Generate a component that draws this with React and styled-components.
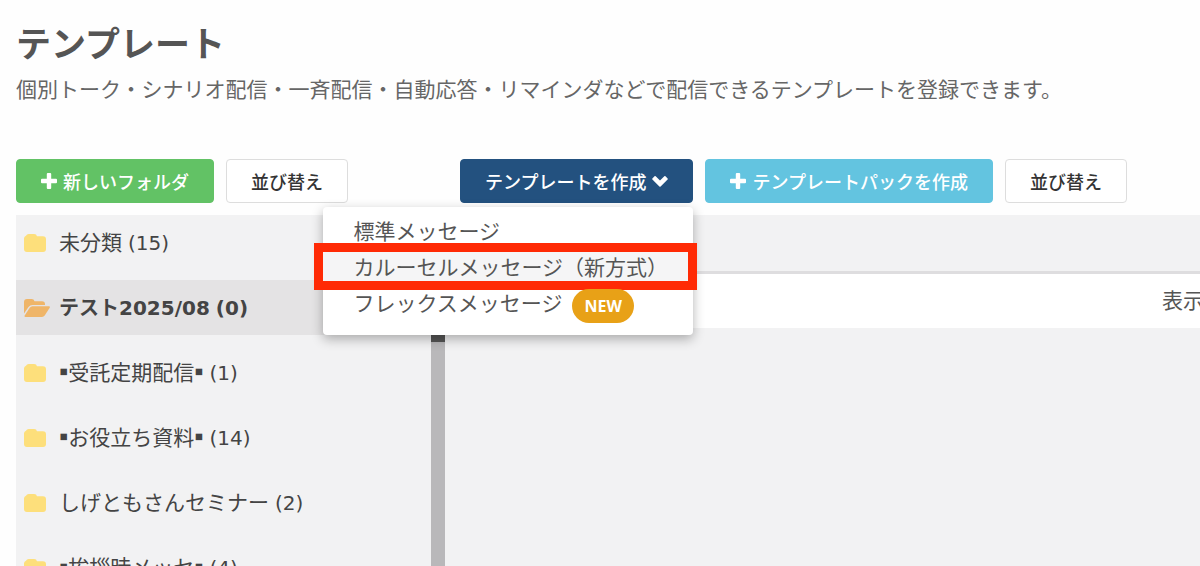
import React from "react";
import styled, { createGlobalStyle, css } from "styled-components";

const folders = [
  { name: "未分類", count: 15 },
  { name: "テスト2025/08", count: 0, open: true },
  { name: "受託定期配信", count: 1, marked: true },
  { name: "お役立ち資料", count: 14, marked: true },
  { name: "しげともさんセミナー", count: 2 },
  { name: "挨拶時メッセ", count: 4, marked: true },
];

//Icons
const PlusIcon = () => (
  <svg width="16" height="16" viewBox="0 0 16 16" fill="currentColor" aria-hidden="true">
    <path d="M6.8 0h2.4a1 1 0 0 1 1 1v4.8H15a1 1 0 0 1 1 1v2.4a1 1 0 0 1-1 1h-4.8V15a1 1 0 0 1-1 1H6.8a1 1 0 0 1-1-1v-4.800H1a1 1 0 0 1-1-1V6.800a1 1 0 0 1 1-1h4.800V1a1 1 0 0 1 1-1z" />
  </svg>
);

const ChevronIcon = () => (
  <svg width="16" height="16" viewBox="0 0 16 16" fill="currentColor" aria-hidden="true">
    <path d="M8.600 13.600a.9.9 0 0 1-1.200 0L.4 6.600a.9.9 0 0 1 0-1.200l2.100-2.100a.9.9 0 0 1 1.200 0L8 7.500l4.300-4.200a.9.9 0 0 1 1.200 0l2.100 2.100a.9.9 0 0 1 0 1.200z" />
  </svg>
);

const FolderIcon = () => (
  <svg width="22" height="20" viewBox="0 0 22 20" fill="#fddf7b" aria-hidden="true">
    <path d="M5 1h5a3 3 0 0 1 3 2.300h6a3 3 0 0 1 3 3V16a3 3 0 0 1-3 3H3a3 3 0 0 1-3-3V5.300a3 3 0 0 1 2-2.500A3 3 0 0 1 5 1z" />
  </svg>
);

const FolderOpenIcon = () => (
  <svg width="26" height="20" viewBox="0 0 26 20" fill="#efb568" aria-hidden="true">
    <path d="M0 15.500V4a3 3 0 0 1 3-3h4.500a3 3 0 0 1 3 2.300H18a3 3 0 0 1 3 3V7H8.500a5 5 0 0 0-4 2z" />
    <path d="M8.500 8.200h16.300c.9 0 1.400.7.900 1.500l-5 7.800A3.500 3.500 0 0 1 18 19H1.500c-.9 0-1.300-.7-.8-1.500l5-7.800a3.500 3.500 0 0 1 2.800-1.500z" />
  </svg>
);

const App = () => {
  return (
    <Page>
      <GlobalStyle />
      <Header>
        <h1>テンプレート</h1>
        <p>
          個別トーク・シナリオ配信・一斉配信・自動応答・リマインダなどで配信できるテンプレートを登録できます。
        </p>
      </Header>
      <Columns>
        <Sidebar>
          <Toolbar>
            <Button $color="green">
              <PlusIcon />
              新しいフォルダ
            </Button>
            <Button>並び替え</Button>
          </Toolbar>
          <FolderPane>
            <FolderList>
              {folders.map((folder) => (
                <Folder key={folder.name} $open={folder.open}>
                  <i>{folder.open ? <FolderOpenIcon /> : <FolderIcon />}</i>
                  <FolderName>
                    {folder.marked && <Square>▪</Square>}
                    {folder.name}
                    {folder.marked && <Square>▪</Square>}
                  </FolderName>
                  <span>({folder.count})</span>
                </Folder>
              ))}
            </FolderList>
            <Scrollbar>
              <Thumb />
            </Scrollbar>
          </FolderPane>
        </Sidebar>
        <Content>
          <Toolbar $inset>
            <Dropdown>
              <Button $color="navy" aria-haspopup="menu" aria-expanded="true">
                テンプレートを作成
                <ChevronIcon />
              </Button>
              <Menu>
                <MenuItem href="#standard">標準メッセージ</MenuItem>
                <MenuItem href="#carousel" $marked>
                  カルーセルメッセージ（新方式）
                </MenuItem>
                <MenuItem href="#flex">
                  フレックスメッセージ
                  <Badge>NEW</Badge>
                </MenuItem>
              </Menu>
            </Dropdown>
            <Button $color="sky">
              <PlusIcon />
              テンプレートパックを作成
            </Button>
            <Button>並び替え</Button>
          </Toolbar>
          <TemplatePane>
            <PaneHead />
            <PaneBar>
              <span>表示</span>
            </PaneBar>
          </TemplatePane>
        </Content>
      </Columns>
    </Page>
  );
};

//Styles
const GlobalStyle = createGlobalStyle`
  * {
    box-sizing: border-box;
    margin: 0;
    padding: 0;
  }
  body {
    background: #fefefe;
    color: #555;
    font-family: "DejaVu Sans", "Noto Sans CJK JP", sans-serif;
    font-size: 21px;
    line-height: 32px;
    overflow: hidden;
  }
`;

const Page = styled.div`
  display: flex;
  flex-direction: column;
  height: 100vh;
  padding-left: 16px;
`;

const Header = styled.header`
  padding: 18px 0 55px;
  font-family: "Noto Sans CJK JP", sans-serif;
  white-space: nowrap;
  h1 {
    font-size: 35px;
    line-height: 48px;
    margin-bottom: 6px;
  }
  p {
    color: #666;
  }
`;

const Columns = styled.div`
  display: flex;
  flex: 1;
  min-height: 0;
`;

const Sidebar = styled.aside`
  display: flex;
  flex-direction: column;
  flex: 0 0 429px;
`;

const Content = styled.main`
  display: flex;
  flex-direction: column;
  flex: 1;
  min-width: 0;
`;

const Toolbar = styled.div`
  display: flex;
  gap: 12px;
  padding: 0 0 12px ${({ $inset }) => ($inset ? "15px" : "0")};
`;

const colors = {
  green: "#62c265",
  navy: "#23517f",
  sky: "#63c4e0",
};

const Button = styled.button`
  display: flex;
  align-items: center;
  gap: 6px;
  flex: none;
  height: 44px;
  padding: 0 24px;
  border: 1px solid #ddd;
  border-radius: 4px;
  background: #fff;
  color: #333;
  font-family: "Noto Sans CJK JP", sans-serif;
  font-size: 18px;
  font-weight: 500;
  white-space: nowrap;
  ${({ $color }) =>
    $color &&
    css`
      border-color: ${colors[$color]};
      background: ${colors[$color]};
      color: #fff;
    `}
`;

const FolderPane = styled.div`
  display: flex;
  flex: 1;
  min-height: 0;
  background: #f2f2f3;
`;

const FolderList = styled.ul`
  display: flex;
  flex-direction: column;
  gap: 10px;
  flex: 1;
  list-style: none;
  overflow: hidden;
`;

const FolderName = styled.span`
  margin-right: 6px;
  font-size: 21px;
`;

const Square = styled.span`
  font-family: "Liberation Sans", sans-serif;
  font-size: 26px;
  line-height: 1;
`;

const Folder = styled.li`
  display: flex;
  align-items: center;
  flex: none;
  height: 55px;
  padding-left: 8px;
  color: #444;
  font-size: 20px;
  white-space: nowrap;
  i {
    display: flex;
    width: 35px;
  }
  ${({ $open }) =>
    $open &&
    css`
      background: #e4e3e4;
      font-weight: bold;
      ${FolderName} {
        font-size: 20px;
      }
    `}
`;

const Scrollbar = styled.div`
  width: 14px;
  background: #b9b8ba;
`;

const Thumb = styled.div`
  height: 127px;
  background: #555;
`;

const TemplatePane = styled.section`
  flex: 1;
  background: #f2f2f3;
`;

const PaneHead = styled.div`
  height: 59px;
  border-bottom: 3px solid #dedddf;
`;

const PaneBar = styled.div`
  display: flex;
  align-items: center;
  justify-content: flex-end;
  height: 54px;
  background: #fff;
  overflow: hidden;
  span {
    margin-right: -4px;
  }
`;

const Dropdown = styled.div`
  position: relative;
`;

const Menu = styled.nav`
  position: absolute;
  z-index: 1;
  top: 48px;
  right: 0;
  width: 370px;
  padding: 5px 0 15px;
  border-radius: 4px;
  background: #fff;
  box-shadow: 0 4px 12px rgba(0, 0, 0, 0.3);
`;

const MenuItem = styled.a`
  display: flex;
  align-items: center;
  position: relative;
  height: 36px;
  padding-left: 30px;
  color: #555;
  font-family: "Noto Sans CJK JP", sans-serif;
  text-decoration: none;
  white-space: nowrap;
  ${({ $marked }) =>
    $marked &&
    css`
      background: #f5f5f6;
      &::after {
        content: "";
        position: absolute;
        inset: -5px -4px -6px -9px;
        border: 9px solid #ff2a05;
      }
    `}
`;

const Badge = styled.span`
  margin: 8px 0 0 10px;
  padding: 0 12px;
  border-radius: 17px;
  background: #e8a117;
  color: #fff;
  font-family: "Open Sans", sans-serif;
  font-size: 16px;
  font-weight: bold;
  line-height: 34px;
`;

export default App;
